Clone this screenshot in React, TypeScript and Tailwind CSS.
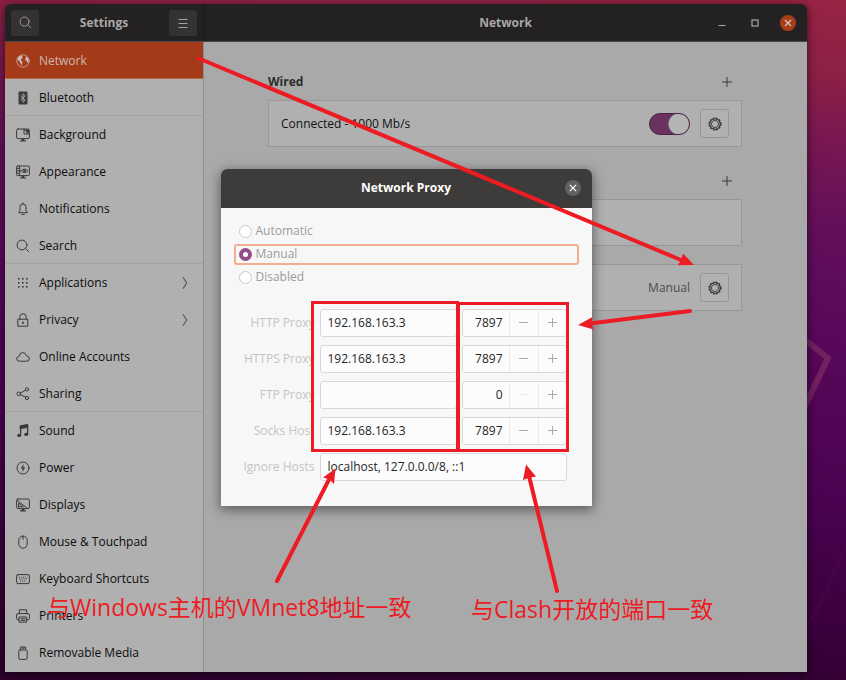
import type { ReactNode } from "react";

const stroke = {
  fill: "none",
  stroke: "currentColor",
  strokeWidth: 1,
  strokeLinecap: "round" as const,
  strokeLinejoin: "round" as const,
};

function Icon({ children, size = 14 }: { children: ReactNode; size?: number }) {
  return (
    <svg width={size} height={size} viewBox="0 0 14 14" aria-hidden="true" className="shrink-0" {...stroke}>
      {children}
    </svg>
  );
}

const SearchGlyph = (
  <>
    <circle cx="6" cy="6" r="4.9" />
    <path d="M9.6 9.6 12.6 12.6" />
  </>
);

type Item = { label: string; icon: ReactNode; active?: boolean; arrow?: boolean; end?: boolean };

const items: Item[] = [
  {
    label: "Network",
    active: true,
    icon: (
      <>
        <circle cx="7" cy="7" r="6.2" strokeWidth="0.8" />
        <path
          d="M2 3.2 5 1.4 6.6 2 6 3.4 6.6 4.4 5.2 5 4.8 6.2 6.4 7.8 6.2 9.4 5.2 11.4 4.6 9.2 3 7 1.4 5.6ZM9.6 2 12 3.8 12.8 6.8 12 9 11.2 8.2 10.8 7 9.2 6.2 9.2 4.4 10.2 3.4Z"
          fill="currentColor"
          stroke="none"
        />
      </>
    ),
  },
  {
    label: "Bluetooth",
    end: true,
    icon: (
      <>
        <rect x="2.5" y="0.5" width="9" height="13" rx="1" fill="currentColor" stroke="none" />
        <path d="M4.8 5 9.2 9.2 7 11.2V2.8L9.2 4.8 4.8 9" stroke="#b0b0b0" strokeWidth="0.9" />
      </>
    ),
  },
  {
    label: "Background",
    icon: (
      <>
        <rect x="0.6" y="1" width="12.8" height="9.6" rx="1.4" />
        <path d="M10 1.5h3v3H10Z" fill="currentColor" stroke="none" />
        <path d="M8 1.2V6H13M8.2 1.4 12.8 5.8M4.4 13h5.2" />
        <path d="M5.6 11h2.8v2H5.6Z" fill="currentColor" stroke="none" />
      </>
    ),
  },
  {
    label: "Appearance",
    icon: (
      <>
        <rect x="0.6" y="1" width="12.8" height="9.6" rx="1" />
        <path d="M3.6 1v9.4M0.8 3.4h2.6M0.8 5.8h2.6M0.8 8.2h2.6M4.4 13h5.2" />
        <path d="M5 5.8Q8.4 2.2 12 5.8 8.4 9.4 5 5.8Z" />
        <circle cx="8.5" cy="5.8" r="1.3" fill="currentColor" stroke="none" />
        <path d="M5.6 11h2.8v2H5.6Z" fill="currentColor" stroke="none" />
      </>
    ),
  },
  {
    label: "Notifications",
    icon: (
      <>
        <path d="M2.8 10.4 4 8.8V5.2Q4 1.9 7 1.9T10 5.2V8.8L11.2 10.4ZM7 0.8v0.8" />
        <path d="M5.8 12.4H8.2" />
      </>
    ),
  },
  { label: "Search", end: true, icon: SearchGlyph },
  {
    label: "Applications",
    arrow: true,
    icon: (
      <g fill="currentColor" stroke="none">
        {[2, 6, 10].map((y) => [3, 7, 11].map((x) => <rect key={`${x}-${y}`} x={x - 1} y={y} width="1.6" height="1.6" />))}
      </g>
    ),
  },
  {
    label: "Privacy",
    arrow: true,
    icon: (
      <>
        <path d="M2.2 6.2H11.8V13.2H2.2ZM3.8 6V3.8Q3.8 0.8 7 0.8T10.2 3.8V6" />
        <path d="M6.3 8.6H7.7V11H6.3Z" fill="currentColor" stroke="none" />
      </>
    ),
  },
  {
    label: "Online Accounts",
    icon: <path d="M3.4 11.2Q0.6 11.2 0.6 8.9T3 6.6Q3.2 2.6 6.8 2.6 9.6 2.6 10.4 5.8 13.4 6 13.4 8.6T10.8 11.2Z" />,
  },
  {
    label: "Sharing",
    end: true,
    icon: (
      <>
        <circle cx="2.8" cy="6.8" r="1.8" />
        <circle cx="11" cy="2.4" r="1.6" />
        <circle cx="11" cy="11" r="1.6" />
        <path d="M4.4 6 9.6 3.2M4.4 7.6 9.6 10.2" />
      </>
    ),
  },
  {
    label: "Sound",
    icon: (
      <>
        <path d="M4.6 11V2L11.6 1V10" strokeWidth="1.3" />
        <path d="M4.6 1.8 11.6 0.8V3.4L4.6 4.4Z" fill="currentColor" />
        <ellipse cx="3.2" cy="11.4" rx="2" ry="1.6" fill="currentColor" stroke="none" />
        <ellipse cx="10.2" cy="10.4" rx="2" ry="1.6" fill="currentColor" stroke="none" />
      </>
    ),
  },
  {
    label: "Power",
    icon: (
      <>
        <circle cx="7" cy="7" r="6" />
        <path d="M7.6 3 4.8 7.6H6.6L6.4 11 9.2 6.4H7.4Z" fill="currentColor" stroke="none" />
      </>
    ),
  },
  {
    label: "Displays",
    icon: (
      <>
        <rect x="0.6" y="1" width="12.8" height="9.6" rx="1.4" />
        <path d="M1.2 2.4 11.4 10.4M2.6 5.6V9M2.6 8.8H6.4M3 5.4 7.4 9" />
        <path d="M5.6 11h2.8v1.2h1.4v1.2H4.2v-1.2h1.4Z" fill="currentColor" stroke="none" />
      </>
    ),
  },
  {
    label: "Mouse & Touchpad",
    icon: (
      <>
        <rect x="2.8" y="1" width="8.4" height="12.2" rx="4.2" />
        <path d="M7 1.4V4.4" />
      </>
    ),
  },
  {
    label: "Keyboard Shortcuts",
    icon: (
      <>
        <rect x="0.6" y="2.6" width="12.8" height="9" rx="1.4" />
        <path d="M2.8 5.2H11.4M3.4 7H11M4 9.2H10" strokeDasharray="1 1.1" strokeLinecap="butt" />
      </>
    ),
  },
  {
    label: "Printers",
    icon: (
      <>
        <path d="M3.4 4.4V0.8H10.6V4.4M3 10.6H1.8Q0.6 10.6 0.6 9.4V6Q0.6 4.6 2 4.6H12Q13.4 4.6 13.4 6V9.4Q13.4 10.6 12.2 10.6H11" />
        <path d="M3.4 8H10.6V13.2H3.4ZM5 9.8H9M5 11.4H9" />
      </>
    ),
  },
  {
    label: "Removable Media",
    icon: (
      <>
        <rect x="2.8" y="4" width="8.4" height="9.4" rx="1.4" />
        <path d="M4.4 3.6V1H9.6V3.6M6 2.2H8" />
      </>
    ),
  },
];

function GearButton({ label }: { label: string }) {
  return (
    <button
      aria-label={label}
      className="grid size-[29px] place-items-center rounded-[3px] border border-[#969696] bg-[#b1b1b1] text-[#2d2d2d]"
    >
      <svg width="14" height="14" viewBox="0 0 14 14" fill="none" stroke="currentColor" aria-hidden="true">
        <circle cx="7" cy="7" r="6" strokeWidth="1.2" strokeDasharray="1.9 1.24" />
        <circle cx="7" cy="7" r="5.2" strokeWidth="1" />
        <circle cx="7" cy="7" r="3.6" strokeWidth="0.8" />
      </svg>
    </button>
  );
}

function AddButton({ label }: { label: string }) {
  return (
    <button aria-label={label} className="grid size-7 place-items-center text-[#3b3b3b]">
      <Icon size={10}>
        <path d="M7 0V14M0 7H14" strokeWidth="1.4" strokeLinecap="butt" />
      </Icon>
    </button>
  );
}

function Sidebar() {
  return (
    <nav className="w-[199px] shrink-0 border-r border-[#8f8f8f] bg-[#b0b0b0]">
      {items.map((item) => (
        <button
          key={item.label}
          className={`flex h-[37px] w-full items-center gap-[9px] border-b pt-[2px] pr-3 pl-[11px] text-left ${
            item.active
              ? "border-[#b3623f] bg-[#a43a17] text-[#c9b9b2]"
              : item.end
                ? "border-[#a3a3a3] text-[#0c0c0c]"
                : "border-transparent text-[#0c0c0c]"
          }`}
        >
          <span className={item.active ? "" : "text-[#3a3a3a]"}>
            <Icon>{item.icon}</Icon>
          </span>
          <span className="flex-1 whitespace-nowrap">{item.label}</span>
          {item.arrow && (
            <span className="text-[#4c4c4c]">
              <Icon size={12}>
                <path d="M5 0.8 9 7 5 13.2" strokeWidth="1.2" />
              </Icon>
            </span>
          )}
        </button>
      ))}
    </nav>
  );
}

function TitleBar() {
  const square = "grid h-[26px] w-7 place-items-center rounded-[3px] bg-[#353233] text-[#a3a1a0]";
  return (
    <header className="flex h-[38px] shrink-0 border-b border-[#4a4848] bg-[#242122] font-bold text-[#aaa8a7]">
      <div className="flex w-[199px] shrink-0 items-center justify-between border-r border-[#1b191a] px-[6px]">
        <button aria-label="Search settings" className={square}>
          <Icon size={13}>{SearchGlyph}</Icon>
        </button>
        <h1>Settings</h1>
        <button aria-label="Menu" className={square}>
          <svg width="10" height="10" viewBox="0 0 10 10" stroke="currentColor" aria-hidden="true">
            <path d="M0.5 1.5H9.5M0.5 5.5H9.5M0.5 9.5H9.5" />
          </svg>
        </button>
      </div>
      <div className="grid flex-1 grid-cols-[1fr_auto_1fr] items-center">
        <h2 className="col-start-2">Network</h2>
        <div className="flex items-center justify-end gap-[17px] pr-[11px]">
          <button aria-label="Minimize" className="grid size-4 place-items-center">
            <svg width="8" height="8" viewBox="0 0 8 8" stroke="currentColor" aria-hidden="true">
              <path d="M0.5 6.5H7.5" />
            </svg>
          </button>
          <button aria-label="Maximize" className="grid size-4 place-items-center">
            <svg width="8" height="8" viewBox="0 0 8 8" stroke="currentColor" fill="none" aria-hidden="true">
              <rect x="1" y="1" width="6" height="6" strokeWidth="1.2" />
            </svg>
          </button>
          <button aria-label="Close" className="grid size-4 place-items-center rounded-full bg-[#a83e18] text-[#d3c2ba]">
            <svg width="8" height="8" viewBox="0 0 8 8" stroke="currentColor" aria-hidden="true">
              <path d="M1 1 7 7M7 1 1 7" strokeWidth="1.4" />
            </svg>
          </button>
        </div>
      </div>
    </header>
  );
}

const card = "flex h-[47px] items-center justify-end border border-[#979797] bg-[#b0b0b0] px-3";

function NetworkPanel() {
  return (
    <main className="flex-1 bg-[#a9a9a9] pt-[22px] pr-[65px] pl-16">
      <div className="flex h-9 items-center justify-between pr-px">
        <h3 className="font-bold text-[#2c2c2c]">Wired</h3>
        <AddButton label="Add wired connection" />
      </div>
      <section className={card}>
        <span className="flex-1 text-[#111111]">Connected - 1000 Mb/s</span>
        <input
          type="checkbox"
          role="switch"
          defaultChecked
          aria-label="Wired connection"
          className="mr-[10px] h-[22px] w-[41px] appearance-none rounded-full border border-[#4c2245] bg-[#68335f] bg-[radial-gradient(circle_at_29px_10px,#b4b4b4_10px,transparent_11px)]"
        />
        <GearButton label="Wired options" />
      </section>
      <div className="mt-4 flex h-9 items-center justify-end pr-px">
        <AddButton label="Add VPN" />
      </div>
      <section className={card} />
      <section className={`${card} mt-[18px]`}>
        <span className="mr-[10px] text-[#4d4d4d]">Manual</span>
        <GearButton label="Proxy options" />
      </section>
    </main>
  );
}

const field = "h-7 min-w-0 rounded-[3px] border border-[#d8d8d8] bg-[#fcfcfc] px-[7px] text-[#262626]";

function ProxyRow({ label, host, port }: { label: string; host: string; port: string }) {
  const id = label.toLowerCase().replace(" ", "-");
  return (
    <>
      <label htmlFor={id} className="text-right text-[#c4c4c4]">
        {label}
      </label>
      <input id={id} defaultValue={host} className={field} />
      <div className="flex h-7 rounded-[3px] border border-[#d8d8d8] bg-[#fcfcfc] text-[#a9a9a9]">
        <input
          aria-label={`${label} port`}
          defaultValue={port}
          className="w-0 min-w-0 flex-1 bg-transparent pr-[6px] text-right text-[#262626]"
        />
        <button
          aria-label={`Decrease ${label} port`}
          className={`grid w-[29px] place-items-center border-l border-[#eaeaea] ${port === "0" ? "text-[#ececec]" : ""}`}
        >
          <svg width="9" height="9" viewBox="0 0 9 9" stroke="currentColor" aria-hidden="true">
            <path d="M0 4.5H9" />
          </svg>
        </button>
        <button aria-label={`Increase ${label} port`} className="grid w-7 place-items-center border-l border-[#eaeaea]">
          <svg width="9" height="9" viewBox="0 0 9 9" stroke="currentColor" aria-hidden="true">
            <path d="M0 4.5H9M4.5 0V9" />
          </svg>
        </button>
      </div>
    </>
  );
}

function ProxyDialog() {
  return (
    <div
      role="dialog"
      aria-labelledby="proxy-title"
      className="w-[371px] overflow-hidden rounded-t-[6px] bg-[#f7f7f7] shadow-[0_3px_12px_1px_rgba(0,0,0,0.45)]"
    >
      <header className="grid h-[39px] grid-cols-[1fr_auto_1fr] items-center bg-[#3e3c3a] px-[11px] text-white">
        <h2 id="proxy-title" className="col-start-2 font-bold">
          Network Proxy
        </h2>
        <button aria-label="Close dialog" className="grid size-4 place-items-center justify-self-end rounded-full bg-[#636160]">
          <svg width="8" height="8" viewBox="0 0 8 8" stroke="currentColor" aria-hidden="true">
            <path d="M0.8 0.8 7.2 7.2M7.2 0.8 0.8 7.2" strokeWidth="1.2" />
          </svg>
        </button>
      </header>
      <fieldset className="px-[13px] pt-[13px] text-[#9c9c9c]">
        {["Automatic", "Manual", "Disabled"].map((mode) => (
          <label
            key={mode}
            className={`mb-[2px] flex h-[21px] items-center gap-1 rounded-[3px] border-2 px-[3px] ${
              mode === "Manual" ? "border-[#f5ad90]" : "border-transparent"
            }`}
          >
            <input
              type="radio"
              name="mode"
              defaultChecked={mode === "Manual"}
              className="size-[13px] appearance-none rounded-full border border-[#c9c9c9] bg-white checked:border-4 checked:border-[#924d8b]"
            />
            {mode}
          </label>
        ))}
      </fieldset>
      <div className="grid grid-cols-[94px_1fr_105px] items-center gap-x-[5px] gap-y-2 pt-[19px] pr-[25px] pb-[25px]">
        <ProxyRow label="HTTP Proxy" host="192.168.163.3" port="7897" />
        <ProxyRow label="HTTPS Proxy" host="192.168.163.3" port="7897" />
        <ProxyRow label="FTP Proxy" host="" port="0" />
        <ProxyRow label="Socks Host" host="192.168.163.3" port="7897" />
        <label htmlFor="ignore" className="text-right text-[#c4c4c4]">
          Ignore Hosts
        </label>
        <input id="ignore" defaultValue="localhost, 127.0.0.0/8, ::1" className={`${field} col-span-2`} />
      </div>
    </div>
  );
}

function Annotations() {
  const note =
    "absolute text-[23px] leading-7 font-normal whitespace-nowrap text-[#ed1c24] font-['Open_Sans','Noto_Sans_CJK_SC',sans-serif]";
  return (
    <div className="pointer-events-none absolute top-0 left-0 h-[680px] w-[846px]">
      <svg width="846" height="680" viewBox="0 0 846 680" fill="none" stroke="#ed1c24" aria-hidden="true">
        <rect x="312.5" y="302.5" width="145" height="148" strokeWidth="3" />
        <rect x="458.5" y="303.5" width="109" height="147" strokeWidth="3" />
        <g strokeWidth="4" strokeLinecap="round">
          <path d="M199 58.5 681 260" />
          <path d="M690 311 592 323.2" />
          <path d="M277 581 329 479.5" />
          <path d="M557 591 529.5 478" />
        </g>
        <g stroke="none" fill="#ed1c24">
          <path d="M694 265 683 253.5 681 260 678 265.2Z" />
          <path d="M578 325 592.5 317 591.5 323.4 593.5 329.5Z" />
          <path d="M335.5 468.5 323 477.5 329.2 479.2 334 484Z" />
          <path d="M526 464.5 523 480 529.4 477.8 536 476.5Z" />
        </g>
      </svg>
      <p className={`${note} top-[593px] left-[47px]`}>与Windows主机的VMnet8地址一致</p>
      <p className={`${note} top-[595px] left-[471px]`}>与Clash开放的端口一致</p>
    </div>
  );
}

export default function App() {
  return (
    <div className="relative flex min-h-screen overflow-hidden bg-[linear-gradient(185deg,#982444_0%,#8c2045_10%,#7a1850_18%,#640f5b_30%,#580859_45%,#4a0350_66%,#3a003c_84%,#2d002b_100%)] pt-1 pr-[39px] pb-2 pl-[5px] font-['Open_Sans',sans-serif] text-[12px] leading-4">
      <svg
        className="absolute top-0 right-0"
        width="60"
        height="680"
        viewBox="786 0 60 680"
        fill="none"
        stroke="#722060"
        aria-hidden="true"
      >
        <path d="M800 336 828 358 800 416" strokeWidth="6" />
        <path d="M846 548 816 612 796 640" stroke="#4d0a50" strokeWidth="3" opacity="0.4" />
      </svg>
      <div className="relative flex flex-1 flex-col overflow-hidden rounded-t-[6px] shadow-[0_2px_8px_1px_rgba(0,0,0,0.5)]">
        <TitleBar />
        <div className="flex flex-1">
          <Sidebar />
          <NetworkPanel />
        </div>
        <div className="absolute inset-0 grid place-items-center pb-[2px]">
          <ProxyDialog />
        </div>
      </div>
      <Annotations />
    </div>
  );
}
